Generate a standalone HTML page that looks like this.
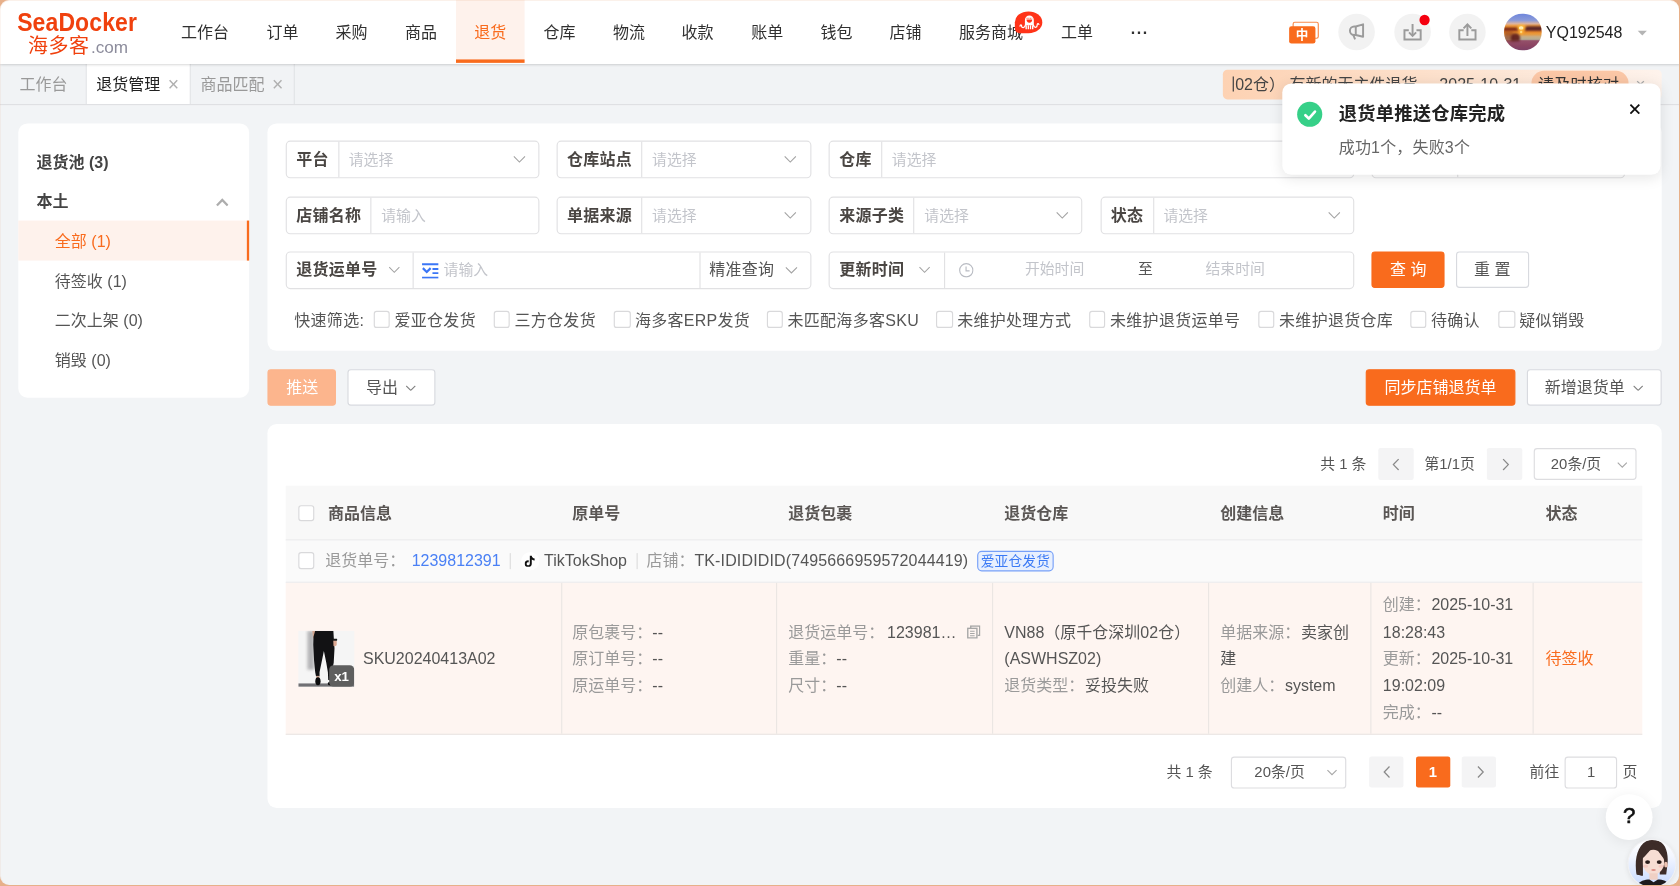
<!DOCTYPE html>
<html lang="zh-CN">
<head>
<meta charset="utf-8">
<title>退货管理 - 海多客</title>
<style>
*{box-sizing:border-box;margin:0;padding:0}
html,body{width:1680px;height:886px;overflow:hidden;background:#f2f4f6}
body{font-family:"Liberation Sans","Noto Sans CJK SC",sans-serif;font-size:14px;color:#333;position:relative}
#app{position:absolute;left:0;top:0;width:1470px;height:776px;transform:scale(1.142857);transform-origin:0 0;background:#f2f4f6;overflow:hidden}
.abs{position:absolute}
/* window frame */
#frame{position:absolute;left:0;top:0;width:1679.4px;height:884.9px;border-radius:9px;box-shadow:0 0 0 40px #e7b08a, inset 0 1px 0 rgba(231,176,138,.18), inset 1px 0 0 rgba(231,176,138,.12);pointer-events:none;z-index:999}
/* header */
#hdr{position:absolute;left:0;top:0;width:1470px;height:56px;background:#fff;box-shadow:0 1px 2.5px rgba(0,0,0,.24);z-index:5}
.logo1{position:absolute;left:15.2px;top:7.9px;font-size:22px;font-weight:700;color:#f0410e;line-height:24px;letter-spacing:.1px;transform:scaleX(.915);transform-origin:0 0}
.logo2{position:absolute;left:24.6px;top:27.6px;font-size:17.5px;font-weight:400;letter-spacing:.4px;color:#f0410e;line-height:24px}
.logo3{position:absolute;left:79.6px;top:28.5px;font-size:15px;color:#8c8c9c;line-height:24px}
.nav{position:absolute;top:0;height:56px;line-height:56px;font-size:14px;color:#303030;white-space:nowrap}
.nav.on{color:#f96b1d}
.navbg{position:absolute;left:398.8px;top:0;width:60.6px;height:55px;background:#fef2ec;border-bottom:3.5px solid #f96b1d}
.circ{position:absolute;top:12px;width:32px;height:32px;border-radius:50%;background:#f2f2f2}
/* tabs */
#tabs{position:absolute;left:0;top:56px;width:1470px;height:36px;background:#f1f3f5;border-bottom:1px solid #dfe0e3}
.tab{position:absolute;top:0;height:35px;line-height:37px;font-size:14px;color:#999;border-right:1px solid #e1e3e6;white-space:nowrap}
.tab.on{background:#fff;color:#222}
.tab i{position:absolute;font-style:normal;font-size:17px;top:-0.5px;color:#b0b0b0;font-family:"Liberation Sans",sans-serif}
/* cards */
.card{position:absolute;background:#fff;border-radius:8px}
.side{position:absolute;left:0;width:202px;height:35px;line-height:35px;font-size:14px;color:#555}

/* notice */
#notice{position:absolute;left:1070px;top:60.6px;width:383.7px;height:26.4px;border-radius:4px;background:linear-gradient(90deg,#fdd2b3 0%,#fde3d0 55%,#fef3ec 100%);overflow:hidden;font-size:14px;color:#444;white-space:nowrap;z-index:6}
/* toast */
#toast{position:absolute;left:1121.8px;top:72.5px;width:331.2px;height:80.1px;background:#fff;border-radius:8px;box-shadow:0 2px 12px rgba(0,0,0,.10);z-index:20}
/* fields */
.fld{position:absolute;height:32.8px;border:1px solid #e1e1e3;border-radius:4px;background:#fff;display:flex;font-size:13px;white-space:nowrap}
.fld .lb{flex:none;height:30.8px;line-height:30.2px;letter-spacing:.2px;padding:0 8.2px 0 8.2px;font-size:14px;font-weight:700;color:#4a4643;border-right:1px solid #e1e1e3}
.fld .ph{flex:1;position:relative;line-height:31px;padding-left:8.4px;color:#c3c5cb}
.chev{position:absolute;width:11px;height:7px}
.cb{display:inline-block;width:14.4px;height:14.4px;border:1px solid #d9d9db;border-radius:2.5px;background:#fff;vertical-align:-1.7px;margin-right:3.8px}
.qf{position:absolute;top:268.9px;height:22px;line-height:22px;font-size:14px;color:#555;white-space:nowrap}
.btn{position:absolute;height:32px;line-height:30px;border-radius:3px;font-size:14px;text-align:center;white-space:nowrap;border:1px solid #d8dadf;background:#fff;color:#555}
.btn.p{background:#f96b1d;border-color:#f96b1d;color:#fff}

/* table */
.pg{position:absolute;font-size:13px;color:#555;white-space:nowrap;line-height:28px;height:28px}
.pgb{position:absolute;width:30.4px;height:27.8px;background:#f4f4f5;border-radius:2px}
.th{position:absolute;top:424.8px;height:47px;line-height:48.4px;font-size:14px;font-weight:700;color:#5a5654;white-space:nowrap}
.td{position:absolute;font-size:14px;line-height:23.5px;color:#555;white-space:nowrap}
.td b{font-weight:400;color:#9a9a9a}
.vl{position:absolute;top:510px;width:1px;height:132.4px;background:#ebe6e3}
</style>
</head>
<body>
<div id="app">

<!-- HEADER -->
<div id="hdr">
  <div class="logo1">SeaDocker</div>
  <div class="logo2">海多客</div>
  <div class="logo3">.com</div>
  <div class="navbg"></div>
  <div class="nav" style="left:158.4px">工作台</div>
  <div class="nav" style="left:233.3px">订单</div>
  <div class="nav" style="left:293.6px">采购</div>
  <div class="nav" style="left:354.4px">商品</div>
  <div class="nav on" style="left:415px">退货</div>
  <div class="nav" style="left:475.5px">仓库</div>
  <div class="nav" style="left:536.3px">物流</div>
  <div class="nav" style="left:596.3px">收款</div>
  <div class="nav" style="left:657.3px">账单</div>
  <div class="nav" style="left:717.9px">钱包</div>
  <div class="nav" style="left:778.4px">店铺</div>
  <div class="nav" style="left:839.2px">服务商城</div>
  <div class="nav" style="left:928.3px">工单</div>
  <div class="nav" style="left:989.5px;font-weight:700;letter-spacing:.5px">···</div>
  <div class="abs" style="left:887.8px;top:9.9px;width:24.3px;height:18.8px;border-radius:12px 12px 12px 4px / 9.4px 9.4px 9.4px 4px;background:#ff3318"></div>
  <svg class="abs" style="left:887.8px;top:10px" width="24.5" height="18.8" viewBox="0 0 24.5 18.8" fill="none">
    <path d="M8.8 12.2 V7.4 A3.9 3.9 0 0 1 16.6 7.4 V12.2 Z" fill="#fff"/>
    <path d="M10.2 7.1 A2.5 2.7 0 0 0 15.2 7.1 Z" fill="#ff3318"/>
    <path d="M10.2 6 H15.2" stroke="#ff3318" stroke-width=".7" stroke-dasharray="1 .6"/>
    <path d="M9.9 12 V15.7 M11.8 12 V15.7 M13.7 12 V15.7 M15.6 12 V15.7" stroke="#fff" stroke-width="1.2"/>
    <path d="M9.2 12 C8.8 14.8 5.9 14.6 5.9 12.8 C5.9 11.5 4.7 11.6 4.5 12.8" stroke="#fff" stroke-width="1.1" stroke-linecap="round"/>
    <path d="M16.3 12 C16.7 14.8 19.5 14.4 19.5 12.2 C19.5 10.4 20.7 10.3 21 11.4" stroke="#fff" stroke-width="1.1" stroke-linecap="round"/>
  </svg>
  <!-- lang icon -->
  <div class="abs" style="left:1131.2px;top:19.2px;width:23px;height:15px;border:1px solid #f98a4b;border-radius:2px"></div>
  <div class="abs" style="left:1127.8px;top:23px;width:22.8px;height:14.8px;background:#f96b1d;border-radius:2px;color:#fff;font-size:11px;font-weight:700;line-height:14.5px;text-align:center">中</div>
  <!-- circle icons -->
  <div class="circ" style="left:1171.4px">
    <svg class="abs" style="left:0;top:0" width="32" height="32" viewBox="0 0 32 32" fill="none" stroke="#9b9b9b" stroke-width="1.7" stroke-linejoin="round" stroke-linecap="butt"><path d="M21.7 9.3 L15.3 11.2 H13.9 A3.7 3.7 0 0 0 13.9 18.6 H15.3 L21.7 20.2 Z"/><path d="M15.3 11.2 V18.6"/><path d="M13.2 18.8 L14.7 22.4"/></svg>
  </div>
  <div class="circ" style="left:1219.5px">
    <svg class="abs" style="left:0;top:0" width="32" height="32" viewBox="0 0 32 32" fill="none" stroke="#9b9b9b" stroke-width="1.7" stroke-linecap="butt" stroke-linejoin="miter"><path d="M12.7 14.4 H8.9 V22.5 H23.1 V14.4 H19.4"/><path d="M16 8.9 V19.2"/><path d="M12.9 16.3 L16 19.4 L19.1 16.3"/></svg>
  </div>
  <div class="abs" style="left:1242.2px;top:13.2px;width:9px;height:9px;border-radius:50%;background:#f5000f"></div>
  <div class="circ" style="left:1267.6px">
    <svg class="abs" style="left:0;top:0" width="32" height="32" viewBox="0 0 32 32" fill="none" stroke="#9b9b9b" stroke-width="1.7" stroke-linecap="butt" stroke-linejoin="miter"><path d="M12.7 14.4 H8.9 V22.5 H23.1 V14.4 H19.4"/><path d="M16 19.4 V9.6"/><path d="M12.6 12.8 L16 9.4 L19.4 12.8"/></svg>
  </div>
  <!-- avatar -->
  <div class="abs" style="left:1316.4px;top:12px;width:32.4px;height:32.4px;border-radius:50%;overflow:hidden;background:linear-gradient(180deg,#6f86dc 0%,#8a9ad9 18%,#d9b3a4 27%,#f3a044 33%,#f79a2c 38%,#e8802a 44%,#ef8f2c 50%,#e79a3e 56%,#c9ae86 63%,#b4ad94 70%,#94506a 74%,#8c4562 86%,#7d3f66 100%)">
    <div class="abs" style="left:17.6px;top:11.2px;width:16px;height:4px;background:#4a1a2a;border-radius:3px 0 0 1px;filter:blur(.7px);opacity:.92"></div>
    <div class="abs" style="left:-1px;top:12.2px;width:13.6px;height:2.6px;background:#6a1c18;filter:blur(.7px);opacity:.9"></div>
    <div class="abs" style="left:0;top:15px;width:8px;height:9px;background:#8a3a1c;filter:blur(1.2px);opacity:.6"></div>
    <div class="abs" style="left:5.6px;top:17px;width:8.4px;height:7.4px;background:#5e1a18;border-radius:50% 50% 20% 20%;filter:blur(.8px);opacity:.9"></div>
    <div class="abs" style="left:12.8px;top:10.8px;width:3.6px;height:3px;border-radius:50%;background:#fff0b8;box-shadow:0 0 2.5px 1.2px #ffbf3c"></div>
    <div class="abs" style="left:13.2px;top:14.8px;width:2.8px;height:2.4px;border-radius:50%;background:#ffd77a;box-shadow:0 0 2px 1px #ffae30"></div>
  </div>
  <div class="abs" style="left:1352.6px;top:0;line-height:56px;font-size:14px;color:#222">YQ192548</div>
  <div class="abs" style="left:1433.2px;top:26.8px;width:0;height:0;border-left:4.3px solid transparent;border-right:4.3px solid transparent;border-top:4.8px solid #b4b4b4"></div>
</div>

<!-- TABS -->
<div id="tabs">
  <div class="tab" style="left:0;width:76.3px;padding-left:17px">工作台</div>
  <div class="tab on" style="left:76.3px;width:90.7px;padding-left:8px">退货管理<i style="left:70.5px">×</i></div>
  <div class="tab" style="left:167px;width:91.3px;padding-left:8.5px">商品匹配<i style="left:71px">×</i></div>
</div>

<!-- SIDEBAR -->
<div class="card" style="left:16px;top:107.5px;width:202px;height:240px">
  <div class="side" style="top:17px;padding-left:16px;font-weight:700;color:#444">退货池 (3)</div>
  <div class="side" style="top:51.5px;padding-left:16px;font-weight:700;color:#444">本土<svg class="abs" style="left:172.6px;top:13.6px" width="11" height="8" viewBox="0 0 11 8" fill="none" stroke="#adadad" stroke-width="2"><path d="M0.8 6.8 L5.5 2 L10.2 6.8"/></svg></div>
  <div class="side" style="top:85.5px;padding-left:32px;line-height:37px;background:#fef2ec;color:#f96b1d;border-right:2px solid #f96b1d">全部 (1)</div>
  <div class="side" style="top:120px;padding-left:32px;line-height:37px">待签收 (1)</div>
  <div class="side" style="top:154.5px;padding-left:32px;line-height:37px">二次上架 (0)</div>
  <div class="side" style="top:189px;padding-left:32px;line-height:37px">销毁 (0)</div>
</div>


<!-- NOTICE -->
<div id="notice">
  <div class="abs" style="left:7.7px;top:0;width:262px;height:27px;overflow:hidden"><div class="abs" style="left:-10.9px;top:0;line-height:26.5px">圳02仓） 有新的无主件退货，<span style="margin-left:5.2px">2025-10-31</span></div></div>
  <div class="abs" style="left:269.5px;top:1.5px;width:85.6px;height:26px;border-radius:11px;background:#fbc7a6;color:#333;line-height:25px;padding-left:6.2px;letter-spacing:.25px">请及时核对</div>
  <div class="abs" style="left:361px;top:0;line-height:26px;font-size:15px;color:#aaa;font-family:'Liberation Sans',sans-serif">×</div>
</div>

<!-- FILTER CARD -->
<div class="card" style="left:234px;top:107.5px;width:1220px;height:199.2px"></div>
<div class="fld" style="left:250px;top:122.9px;width:222px"><div class="lb">平台</div><div class="ph">请选择</div><svg class="chev" style="left:197.9px;top:11.8px" viewBox="0 0 11 7" fill="none" stroke="#a3a3a3" stroke-width="1"><path d="M0.6 0.9 L5.5 5.8 L10.4 0.9"/></svg></div>
<div class="fld" style="left:487px;top:122.9px;width:222.6px"><div class="lb">仓库站点</div><div class="ph">请选择</div><svg class="chev" style="left:197.9px;top:11.8px" viewBox="0 0 11 7" fill="none" stroke="#a3a3a3" stroke-width="1"><path d="M0.6 0.9 L5.5 5.8 L10.4 0.9"/></svg></div>
<div class="fld" style="left:725.2px;top:122.9px;width:459.6px"><div class="lb">仓库</div><div class="ph">请选择</div><svg class="chev" style="left:435.5px;top:11.8px" viewBox="0 0 11 7" fill="none" stroke="#a3a3a3" stroke-width="1"><path d="M0.6 0.9 L5.5 5.8 L10.4 0.9"/></svg></div>
<div class="fld" style="left:1200.4px;top:122.9px;width:222px"><div class="lb">处理方式</div><div class="ph">请选择</div><svg class="chev" style="left:197.9px;top:11.8px" viewBox="0 0 11 7" fill="none" stroke="#a3a3a3" stroke-width="1"><path d="M0.6 0.9 L5.5 5.8 L10.4 0.9"/></svg></div>
<div class="fld" style="left:250px;top:171.8px;width:222px"><div class="lb">店铺名称</div><div class="ph">请输入</div></div>
<div class="fld" style="left:487px;top:171.8px;width:222.6px"><div class="lb">单据来源</div><div class="ph">请选择</div><svg class="chev" style="left:197.9px;top:11.8px" viewBox="0 0 11 7" fill="none" stroke="#a3a3a3" stroke-width="1"><path d="M0.6 0.9 L5.5 5.8 L10.4 0.9"/></svg></div>
<div class="fld" style="left:725.2px;top:171.8px;width:222px"><div class="lb">来源子类</div><div class="ph">请选择</div><svg class="chev" style="left:197.9px;top:11.8px" viewBox="0 0 11 7" fill="none" stroke="#a3a3a3" stroke-width="1"><path d="M0.6 0.9 L5.5 5.8 L10.4 0.9"/></svg></div>
<div class="fld" style="left:962.8px;top:171.8px;width:222px"><div class="lb">状态</div><div class="ph">请选择</div><svg class="chev" style="left:197.9px;top:11.8px" viewBox="0 0 11 7" fill="none" stroke="#a3a3a3" stroke-width="1"><path d="M0.6 0.9 L5.5 5.8 L10.4 0.9"/></svg></div>
<div class="fld" style="left:250px;top:220.1px;width:459.6px">
  <div class="lb" style="width:110.6px">退货运单号</div><svg class="chev" style="left:88.6px;top:12.2px;width:10px;height:6.4px" viewBox="0 0 11 7" fill="none" stroke="#a3a3a3" stroke-width="1"><path d="M0.6 0.9 L5.5 5.8 L10.4 0.9"/></svg>
  <svg class="abs" style="left:118.4px;top:9px" width="15" height="14" viewBox="0 0 15 14" fill="none" stroke="#3b76f6" stroke-width="1.7"><path d="M0.3 1.3 H14.6"/><path d="M9.4 5.3 H14.6"/><path d="M9.4 9 H14.6"/><path d="M0.3 12.9 H14.6"/><path d="M1 4.6 L4.4 8 L7.8 4.6" stroke-width="1.9"/></svg>
  <div class="ph" style="padding-left:26.5px">请输入</div>
  <div class="abs" style="left:360.9px;top:0;width:1px;height:31px;background:#e1e1e3"></div>
  <div class="abs" style="left:369.6px;top:0;line-height:31.6px;font-size:14px;color:#555;letter-spacing:.2px">精准查询</div><svg class="chev" style="left:435.5px;top:11.8px" viewBox="0 0 11 7" fill="none" stroke="#a3a3a3" stroke-width="1"><path d="M0.6 0.9 L5.5 5.8 L10.4 0.9"/></svg>
</div>
<div class="fld" style="left:725.2px;top:220.1px;width:459.6px">
  <div class="lb" style="width:101px">更新时间</div><svg class="chev" style="left:77.8px;top:12.2px;width:10px;height:6.4px" viewBox="0 0 11 7" fill="none" stroke="#a3a3a3" stroke-width="1"><path d="M0.6 0.9 L5.5 5.8 L10.4 0.9"/></svg>
  <svg class="abs" style="left:112.5px;top:8.7px" width="13" height="13" viewBox="0 0 13 13" fill="none" stroke="#b9bcc3" stroke-width="1"><circle cx="6.5" cy="6.5" r="5.8"/><path d="M6.3 3.2 V7 H9.4"/></svg>
  <div class="abs" style="left:170.6px;top:0;line-height:30px;color:#c3c5cb">开始时间</div>
  <div class="abs" style="left:269.6px;top:0;line-height:30px;color:#555">至</div>
  <div class="abs" style="left:328.6px;top:0;line-height:30px;color:#c3c5cb">结束时间</div>
</div>
<div class="btn p" style="left:1200.4px;top:220.1px;width:63.6px">查 询</div>
<div class="btn" style="left:1273.8000000000002px;top:220.1px;width:64px">重 置</div>
<div class="qf" style="left:257.4px;letter-spacing:.3px">快速筛选:</div>
<div class="qf" style="left:327.0px;letter-spacing:.25px"><span class="cb"></span>爱亚仓发货</div>
<div class="qf" style="left:432.0px;letter-spacing:.25px"><span class="cb"></span>三方仓发货</div>
<div class="qf" style="left:537.4px;letter-spacing:.25px"><span class="cb"></span>海多客ERP发货</div>
<div class="qf" style="left:670.9px;letter-spacing:.25px"><span class="cb"></span>未匹配海多客SKU</div>
<div class="qf" style="left:819.4px;letter-spacing:.25px"><span class="cb"></span>未维护处理方式</div>
<div class="qf" style="left:953.1px;letter-spacing:.25px"><span class="cb"></span>未维护退货运单号</div>
<div class="qf" style="left:1101px;letter-spacing:.25px"><span class="cb"></span>未维护退货仓库</div>
<div class="qf" style="left:1233.9px;letter-spacing:.25px"><span class="cb"></span>待确认</div>
<div class="qf" style="left:1311.2px;letter-spacing:.25px"><span class="cb"></span>疑似销毁</div>


<div class="btn p" style="left:234.3px;top:323.4px;width:60.2px;background:#fcb58d;border-color:#fcb58d">推送</div>
<div class="btn" style="left:304.2px;top:323.2px;width:76.4px;text-align:left;padding-left:15px">导出<svg class="abs" style="left:49.9px;top:12.4px" width="8.8" height="5.4" viewBox="0 0 8.8 5.4" fill="none" stroke="#808080" stroke-width="1"><path d="M0.4 0.6 L4.4 4.6 L8.4 0.6"/></svg></div>
<div class="btn p" style="left:1195.2px;top:323.2px;width:130.4px">同步店铺退货单</div>
<div class="btn" style="left:1335.6px;top:323.2px;width:118.4px;text-align:left;padding-left:15px">新增退货单<svg class="abs" style="left:92.4px;top:12.4px" width="8.8" height="5.4" viewBox="0 0 8.8 5.4" fill="none" stroke="#808080" stroke-width="1"><path d="M0.4 0.6 L4.4 4.6 L8.4 0.6"/></svg></div>


<!-- TABLE CARD -->
<div class="card" style="left:234px;top:371px;width:1220px;height:336.4px"></div>
<div class="pg" style="left:1155.2px;top:392px">共 1 条</div>
<div class="pgb" style="left:1206.2px;top:392px"><svg class="abs" style="left:11.5px;top:8.6px" width="7" height="11" viewBox="0 0 7 11" fill="none" stroke="#8a8a8a" stroke-width="1.1"><path d="M5.8 0.7 L1.2 5.5 L5.8 10.3"/></svg></div>
<div class="pg" style="left:1246.4px;top:392px">第1/1页</div>
<div class="pgb" style="left:1301.2px;top:392px"><svg class="abs" style="left:12.5px;top:8.6px" width="7" height="11" viewBox="0 0 7 11" fill="none" stroke="#8a8a8a" stroke-width="1.1"><path d="M1.2 0.7 L5.8 5.5 L1.2 10.3"/></svg></div>
<div class="abs" style="left:1342px;top:392px;width:90.4px;height:28px;border:1px solid #dddde0;border-radius:3px;background:#fff;font-size:13px;color:#555;line-height:26.5px;padding-left:14px;white-space:nowrap">20条/页<svg class="abs" style="left:71.9px;top:10.6px" width="9" height="6" viewBox="0 0 9 6" fill="none" stroke="#a8a8a8" stroke-width="1"><path d="M0.5 0.8 L4.5 4.8 L8.5 0.8"/></svg></div>

<!-- table header -->
<div class="abs" style="left:250px;top:424.8px;width:1187.4px;height:48px;background:#f8f8f8;border-bottom:1px solid #e9e9eb"></div>
<span class="cb abs" style="left:260.6px;top:441.6px;margin:0"></span>
<div class="th" style="left:287px">商品信息</div>
<div class="th" style="left:500.8px">原单号</div>
<div class="th" style="left:689.8px">退货包裹</div>
<div class="th" style="left:878.8px">退货仓库</div>
<div class="th" style="left:1067.8px">创建信息</div>
<div class="th" style="left:1210px">时间</div>
<div class="th" style="left:1352.4px">状态</div>

<!-- group row -->
<div class="abs" style="left:250px;top:472.8px;width:1187.4px;height:37.2px;background:#fafafa;border-bottom:1px solid #ebebed"></div>
<span class="cb abs" style="left:260.6px;top:483.4px;margin:0"></span>
<div class="td" style="left:284.6px;top:479px;color:#9a9a9a">退货单号：</div>
<div class="td" style="left:360.2px;top:479px;color:#4a80f5">1239812391</div>
<div class="abs" style="left:446.2px;top:484.2px;width:1px;height:14px;background:#dcdcdc"></div>
<div class="abs" style="left:455.6px;top:482.8px;width:16px;height:16px;border-radius:50%;background:#fff"></div>
<svg class="abs" style="left:459.4px;top:485.6px" width="9" height="10.4" viewBox="0 0 9 10.4"><path d="M4.6 0 H6.3 C6.4 1.5 7.3 2.5 8.9 2.7 V4.4 C7.9 4.4 7 4.1 6.3 3.6 V7.2 C6.3 9.1 4.9 10.4 3.2 10.4 C1.4 10.4 0 9 0 7.3 C0 5.4 1.6 4 3.6 4.3 V6.1 C2.6 5.8 1.8 6.4 1.8 7.3 C1.8 8.1 2.4 8.7 3.2 8.7 C4 8.7 4.6 8.1 4.6 7.1 Z" fill="#111"/></svg>
<div class="td" style="left:476px;top:479px;color:#555">TikTokShop</div>
<div class="abs" style="left:556.8px;top:484.2px;width:1px;height:14px;background:#dcdcdc"></div>
<div class="td" style="left:565.6px;top:479px"><b>店铺：</b><span style="letter-spacing:.12px">TK-IDIDIDID(7495666959572044419)</span></div>
<div class="abs" style="left:855px;top:481.8px;width:67px;height:18.2px;border:1px solid #76a0f8;border-radius:4px;background:#e8f0fe;color:#3b7af5;font-size:12px;line-height:16.6px;letter-spacing:.15px;text-align:center;white-space:nowrap">爱亚仓发货</div>

<!-- data row -->
<div class="abs" style="left:250px;top:510px;width:1187.4px;height:132.6px;background:#fef5f1;border-bottom:1px solid #ebe6e4"></div>
<div class="vl" style="left:490.9px"></div><div class="vl" style="left:679.2px"></div><div class="vl" style="left:868.2px"></div><div class="vl" style="left:1057.2px"></div><div class="vl" style="left:1199.4px"></div><div class="vl" style="left:1340.7px"></div>
<!-- product image -->
<div class="abs" style="left:260.8px;top:552.2px;width:48.8px;height:48.8px;overflow:hidden;background:#f5f5f5">
  <div class="abs" style="left:7.8px;top:0;width:6.6px;height:34px;background:#b4b4b6;filter:blur(1.2px)"></div>
  <div class="abs" style="left:0;top:45.4px;width:49px;height:3.6px;background:#707074"></div>
  <svg class="abs" style="left:0;top:0" width="48.8" height="48.8" viewBox="0 0 48.8 48.8">
    <path d="M12.2 0 H15 L14.6 6.8 L13 6.4 Z" fill="#d2a690"/>
    <path d="M14.8 0 H30.7 L31 5.2 L31.7 15.5 L31 27.9 L29.3 36.2 L28.6 43.1 H26.2 L25.9 36.2 L24.5 27.9 L22.4 17.6 L20.3 27.9 L18.6 36.2 V39.7 H15.5 L14.8 36.2 L13.8 25.9 L13.1 12.1 L13.3 5.2 Z" fill="#121214"/>
    <rect x="15.8" y="39.4" width="2.6" height="2.4" fill="#c9a08c"/>
    <ellipse cx="17.2" cy="44.2" rx="2.3" ry="3.5" fill="#0b0b0c"/>
    <path d="M30.6 8.2 H33.6 V12 C33.6 13.4 31.4 14 30.8 13 Z" fill="#dba892"/>
    <rect x="30.4" y="6.8" width="3.6" height="1.9" rx=".4" fill="#1a1a1a"/>
    <ellipse cx="28" cy="46.2" rx="2.2" ry="1.6" fill="#0b0b0c"/>
  </svg>
  <div class="abs" style="left:27.2px;top:30.3px;width:21.8px;height:18.6px;border-radius:4px;background:#5e5e5e;color:#fff;font-size:11.6px;font-weight:700;line-height:20.4px;text-align:center">x1</div>
</div>
<div class="td" style="left:317.6px;top:565px">SKU20240413A02</div>
<div class="td" style="left:500.8px;top:541.8px"><b>原包裹号：</b>--<br><b>原订单号：</b>--<br><b>原运单号：</b>--</div>
<div class="td" style="left:689.8px;top:541.8px"><b>退货运单号：</b><span style="margin-left:2.4px">123981…</span><br><b>重量：</b>--<br><b>尺寸：</b>--</div>
<svg class="abs" style="left:845.6px;top:547.4px" width="12" height="12" viewBox="0 0 12 12" fill="none" stroke="#a6a6a6" stroke-width="1.2"><path d="M3.4 2.6 V0.8 H11.2 V9 H9.4"/><rect x="0.8" y="2.8" width="8" height="8.4"/><path d="M2.8 5.4 H6.8 M2.8 7.4 H6.8 M2.8 9.2 H6.8" stroke-width="0.9"/></svg>
<div class="td" style="left:878.8px;top:541.8px">VN88（原千仓深圳02仓）<br>(ASWHSZ02)<br><b>退货类型：</b><span style="margin-left:.5px">妥投失败</span></div>
<div class="td" style="left:1067.8px;top:541.8px"><b>单据来源：</b><span style="margin-left:.5px">卖家创</span><br>建<br><b>创建人：</b><span style="margin-left:.5px">system</span></div>
<div class="td" style="left:1210px;top:518.3px"><b>创建：</b><span style="margin-left:.5px">2025-10-31</span><br>18:28:43<br><b>更新：</b><span style="margin-left:.5px">2025-10-31</span><br>19:02:09<br><b>完成：</b><span style="margin-left:.5px">--</span></div>
<div class="td" style="left:1352.4px;top:565.3px;color:#f96b1d">待签收</div>

<!-- bottom pagination -->
<div class="pg" style="left:1020.6px;top:661.6px">共 1 条</div>
<div class="abs" style="left:1077.2px;top:661.6px;width:100.4px;height:28px;border:1px solid #dddde0;border-radius:3px;background:#fff;font-size:13px;color:#555;line-height:26.5px;padding-left:19.4px;white-space:nowrap">20条/页<svg class="abs" style="left:83.2px;top:10.4px" width="9" height="6" viewBox="0 0 9 6" fill="none" stroke="#a8a8a8" stroke-width="1"><path d="M0.5 0.8 L4.5 4.8 L8.5 0.8"/></svg></div>
<div class="pgb" style="left:1198px;top:661.6px"><svg class="abs" style="left:11.5px;top:8.6px" width="7" height="11" viewBox="0 0 7 11" fill="none" stroke="#8a8a8a" stroke-width="1.1"><path d="M5.8 0.7 L1.2 5.5 L5.8 10.3"/></svg></div>
<div class="pgb" style="left:1238.6px;top:661.6px;background:#f96b1d;color:#fff;font-size:13px;font-weight:700;text-align:center;line-height:27.6px">1</div>
<div class="pgb" style="left:1279px;top:661.6px"><svg class="abs" style="left:12.5px;top:8.6px" width="7" height="11" viewBox="0 0 7 11" fill="none" stroke="#8a8a8a" stroke-width="1.1"><path d="M1.2 0.7 L5.8 5.5 L1.2 10.3"/></svg></div>
<div class="pg" style="left:1338.4px;top:661.6px">前往</div>
<div class="abs" style="left:1369.4px;top:661.6px;width:45.6px;height:28px;border:1px solid #dddde0;border-radius:3px;background:#fff;font-size:13px;color:#555;line-height:26.5px;text-align:center">1</div>
<div class="pg" style="left:1419.6px;top:661.6px">页</div>

<!-- floating help -->
<div class="abs" style="left:1405.4px;top:694.9px;width:40.2px;height:40.2px;border-radius:50%;background:#fff;box-shadow:0 2px 12px rgba(0,0,0,.07);font-size:19.5px;font-weight:400;-webkit-text-stroke:.55px #111;color:#111;text-align:center;line-height:36.6px;font-family:'Liberation Sans',sans-serif;z-index:30">?</div>
<!-- assistant avatar -->
<div class="abs" id="bot" style="left:1425px;top:735px;width:41px;height:41px;border-radius:50%;overflow:hidden;background:linear-gradient(180deg,#ffffff 0%,#f3f6ff 35%,#c6d9ff 100%);box-shadow:0 0 0 1px #f1f1f3, 0 1px 6px rgba(0,0,0,.12);z-index:30">
  <svg class="abs" style="left:0;top:0" width="41" height="41" viewBox="0 0 41 41">
    <g transform="translate(20.5 42.6) scale(1.13) translate(-21 -41)">
    <path d="M9 30 C7 18 10 4 21 3 C31 3 34 12 33 22 L32 30 L27 30 L27 14 L14 14 L13.5 31 Z" fill="#3d2c28"/>
    <ellipse cx="22" cy="20.5" rx="8.4" ry="9.6" fill="#f7ddd3"/>
    <path d="M12.5 19 C12 9 18 5.5 22.5 6 C20 11 17.5 14 13.8 17.5 L14 31 L9.5 30 C8.4 25 9.5 20 12.5 19 Z" fill="#3d2c28"/>
    <path d="M22.5 6 C28 6 32 10 31.2 19 C28 15 25 11 22.5 6 Z" fill="#3d2c28"/>
    <ellipse cx="17.6" cy="20.4" rx="1.9" ry="1.5" fill="#2a1d1b"/><ellipse cx="26.6" cy="20.4" rx="1.9" ry="1.5" fill="#2a1d1b"/>
    <ellipse cx="16" cy="23.6" rx="2" ry="1.2" fill="#f4c1b8" opacity=".7"/><ellipse cx="28" cy="23.6" rx="2" ry="1.2" fill="#f4c1b8" opacity=".7"/>
    <ellipse cx="31.8" cy="22.4" rx="1.4" ry="2.2" fill="#eec3b3"/>
    <ellipse cx="22.2" cy="26.6" rx="1.8" ry="0.8" fill="#dd8f86"/>
    <path d="M19 29 H25.4 V34 H19 Z" fill="#f0d0c4"/>
    <path d="M8 41 C10 35 15 33.8 19 33.8 L22.2 36 L25.6 33.8 C30 33.8 34 35 36 41 Z" fill="#1d1b1e"/>
    </g>
  </svg>
</div>
<!-- TOAST -->
<div id="toast">
  <div class="abs" style="left:13px;top:16.3px;width:22.6px;height:22.6px;border-radius:50%;background:#36d088"></div>
  <svg class="abs" style="left:13px;top:16.3px" width="22.6" height="22.6" viewBox="0 0 22.6 22.6" fill="none" stroke="#fff" stroke-width="2.3" stroke-linecap="round" stroke-linejoin="round"><path d="M7.2 11.8 L10.2 14.7 L15.6 8.6"/></svg>
  <div class="abs" style="left:49.6px;top:13.9px;font-size:16px;font-weight:700;color:#222;line-height:27px;white-space:nowrap;letter-spacing:.2px">退货单推送仓库完成</div>
  <div class="abs" style="left:49.6px;top:46.1px;font-size:14px;color:#666;line-height:21px;white-space:nowrap;letter-spacing:.15px">成功1个，失败3个</div>
  <svg class="abs" style="left:303.8px;top:18.3px" width="9" height="9" viewBox="0 0 9 9" fill="none" stroke="#111" stroke-width="1.6"><path d="M0.6 0.6 L8.4 8.4 M8.4 0.6 L0.6 8.4"/></svg>
</div>

</div>
<div id="frame"></div>
</body>
</html>
